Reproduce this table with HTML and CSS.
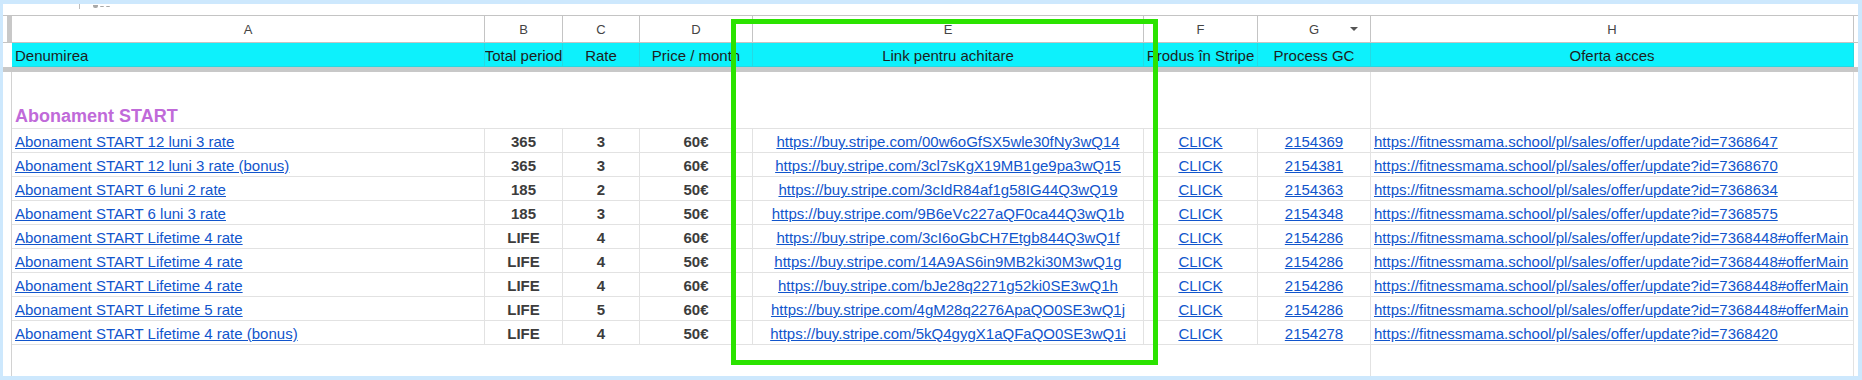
FILE: index.html
```html
<!DOCTYPE html>
<html lang="ro">
<head>
<meta charset="utf-8">
<title>Abonament START</title>
<link rel="stylesheet" href="styles.css">
</head>
<body>
<div class="frame">
  <div class="sheet">
    <div class="topstrip"><span class="tick"></span><span class="marks"><i class="mk mk1"></i><i class="mk mk2"></i><i class="mk mk3"></i></span></div>
    <div class="grid">
      <!-- column letters -->
      <div class="hd lead"><span class="frz"></span></div>
      <div class="hd">A</div>
      <div class="hd">B</div>
      <div class="hd">C</div>
      <div class="hd">D</div>
      <div class="hd">E</div>
      <div class="hd">F</div>
      <div class="hd drop">G<span class="tri"></span></div>
      <div class="hd">H</div>
      <div class="hd trail"></div>

      <!-- cyan header -->
      <div class="blank"></div>
      <div class="ch left">Denumirea</div>
      <div class="ch">Total period</div>
      <div class="ch">Rate</div>
      <div class="ch">Price / month</div>
      <div class="ch">Link pentru achitare</div>
      <div class="ch">Produs în Stripe</div>
      <div class="ch">Process GC</div>
      <div class="ch">Oferta acces</div>
      <div class="blank"></div>

      <div class="freeze"></div>

      <!-- section -->
      <div class="lead"></div>
      <div class="sec">Abonament START</div>
      <div class="c"></div>
      <div class="blank"></div>

      <!-- rows -->
      <div class="lead"></div>
      <div class="c l"><a class="lnk">Abonament START 12 luni 3 rate</a></div>
      <div class="c m b">365</div>
      <div class="c m b">3</div>
      <div class="c m b">60€</div>
      <div class="c m"><a class="lnk">https://buy.stripe.com/00w6oGfSX5wle30fNy3wQ14</a></div>
      <div class="c m"><a class="lnk">CLICK</a></div>
      <div class="c m"><a class="lnk">2154369</a></div>
      <div class="c l"><a class="lnk">https://fitnessmama.school/pl/sales/offer/update?id=7368647</a></div>
      <div class="blank"></div>

      <div class="lead"></div>
      <div class="c l"><a class="lnk">Abonament START 12 luni 3 rate (bonus)</a></div>
      <div class="c m b">365</div>
      <div class="c m b">3</div>
      <div class="c m b">60€</div>
      <div class="c m"><a class="lnk">https://buy.stripe.com/3cl7sKgX19MB1ge9pa3wQ15</a></div>
      <div class="c m"><a class="lnk">CLICK</a></div>
      <div class="c m"><a class="lnk">2154381</a></div>
      <div class="c l"><a class="lnk">https://fitnessmama.school/pl/sales/offer/update?id=7368670</a></div>
      <div class="blank"></div>

      <div class="lead"></div>
      <div class="c l"><a class="lnk">Abonament START 6 luni 2 rate</a></div>
      <div class="c m b">185</div>
      <div class="c m b">2</div>
      <div class="c m b">50€</div>
      <div class="c m"><a class="lnk">https://buy.stripe.com/3cIdR84af1g58IG44Q3wQ19</a></div>
      <div class="c m"><a class="lnk">CLICK</a></div>
      <div class="c m"><a class="lnk">2154363</a></div>
      <div class="c l"><a class="lnk">https://fitnessmama.school/pl/sales/offer/update?id=7368634</a></div>
      <div class="blank"></div>

      <div class="lead"></div>
      <div class="c l"><a class="lnk">Abonament START 6 luni 3 rate</a></div>
      <div class="c m b">185</div>
      <div class="c m b">3</div>
      <div class="c m b">50€</div>
      <div class="c m"><a class="lnk">https://buy.stripe.com/9B6eVc227aQF0ca44Q3wQ1b</a></div>
      <div class="c m"><a class="lnk">CLICK</a></div>
      <div class="c m"><a class="lnk">2154348</a></div>
      <div class="c l"><a class="lnk">https://fitnessmama.school/pl/sales/offer/update?id=7368575</a></div>
      <div class="blank"></div>

      <div class="lead"></div>
      <div class="c l"><a class="lnk">Abonament START Lifetime 4 rate</a></div>
      <div class="c m b">LIFE</div>
      <div class="c m b">4</div>
      <div class="c m b">60€</div>
      <div class="c m"><a class="lnk">https://buy.stripe.com/3cI6oGbCH7Etgb844Q3wQ1f</a></div>
      <div class="c m"><a class="lnk">CLICK</a></div>
      <div class="c m"><a class="lnk">2154286</a></div>
      <div class="c l"><a class="lnk">https://fitnessmama.school/pl/sales/offer/update?id=7368448#offerMain</a></div>
      <div class="blank"></div>

      <div class="lead"></div>
      <div class="c l"><a class="lnk">Abonament START Lifetime 4 rate</a></div>
      <div class="c m b">LIFE</div>
      <div class="c m b">4</div>
      <div class="c m b">50€</div>
      <div class="c m"><a class="lnk">https://buy.stripe.com/14A9AS6in9MB2ki30M3wQ1g</a></div>
      <div class="c m"><a class="lnk">CLICK</a></div>
      <div class="c m"><a class="lnk">2154286</a></div>
      <div class="c l"><a class="lnk">https://fitnessmama.school/pl/sales/offer/update?id=7368448#offerMain</a></div>
      <div class="blank"></div>

      <div class="lead"></div>
      <div class="c l"><a class="lnk">Abonament START Lifetime 4 rate</a></div>
      <div class="c m b">LIFE</div>
      <div class="c m b">4</div>
      <div class="c m b">60€</div>
      <div class="c m"><a class="lnk">https://buy.stripe.com/bJe28q2271g52ki0SE3wQ1h</a></div>
      <div class="c m"><a class="lnk">CLICK</a></div>
      <div class="c m"><a class="lnk">2154286</a></div>
      <div class="c l"><a class="lnk">https://fitnessmama.school/pl/sales/offer/update?id=7368448#offerMain</a></div>
      <div class="blank"></div>

      <div class="lead"></div>
      <div class="c l"><a class="lnk">Abonament START Lifetime 5 rate</a></div>
      <div class="c m b">LIFE</div>
      <div class="c m b">5</div>
      <div class="c m b">60€</div>
      <div class="c m"><a class="lnk">https://buy.stripe.com/4gM28q2276ApaQO0SE3wQ1j</a></div>
      <div class="c m"><a class="lnk">CLICK</a></div>
      <div class="c m"><a class="lnk">2154286</a></div>
      <div class="c l"><a class="lnk">https://fitnessmama.school/pl/sales/offer/update?id=7368448#offerMain</a></div>
      <div class="blank"></div>

      <div class="lead"></div>
      <div class="c l"><a class="lnk">Abonament START Lifetime 4 rate (bonus)</a></div>
      <div class="c m b">LIFE</div>
      <div class="c m b">4</div>
      <div class="c m b">50€</div>
      <div class="c m"><a class="lnk">https://buy.stripe.com/5kQ4gygX1aQFaQO0SE3wQ1i</a></div>
      <div class="c m"><a class="lnk">CLICK</a></div>
      <div class="c m"><a class="lnk">2154278</a></div>
      <div class="c l"><a class="lnk">https://fitnessmama.school/pl/sales/offer/update?id=7368420</a></div>
      <div class="blank"></div>

      <!-- empty tail -->
      <div class="lead"></div>
      <div class="fill"></div>
      <div class="fillh"></div>
      <div class="blank"></div>
    </div>
  </div>
  <div class="annot"></div>
</div>
</body>
</html>
```

FILE: styles.css
```css
* { box-sizing: border-box; }
html, body { margin: 0; padding: 0; }
body {
  background: #cde8fd;
  font-family: "Liberation Sans", Arial, sans-serif;
  width: 1862px;
  height: 380px;
  overflow: hidden;
}
.frame {
  position: relative;
  height: 380px;
  padding: 4px 4px 4px 3px;
}
.sheet {
  background: #fff;
  height: 372px;
  display: flex;
  flex-direction: column;
}
.topstrip {
  height: 11px;
  display: flex;
  align-items: flex-start;
  overflow: hidden;
  padding-left: 76px;
}
.tick {
  width: 1px;
  height: 5px;
  background: #bdbdbd;
}
.marks {
  display: flex;
  gap: 2px;
  margin-left: 13px;
  margin-top: 1px;
}
.mk {
  display: block;
  background: #a8a8a8;
  border-radius: 0 0 2px 2px;
}
.mk1 { width: 5px; height: 3px; }
.mk2 { width: 4px; height: 1px; margin-top: 1px; }
.mk3 { width: 4px; height: 1px; margin-top: 1px; }
.grid {
  display: grid;
  grid-template-columns: 9px 473px 78px 77px 113px 391px 114px 113px 483px 4px;
  grid-template-rows: 28px 24px 5px 57px repeat(9, 24px) 31px;
}
.hd {
  border-top: 1px solid #c4c4c4;
  border-bottom: 1px solid #c4c4c4;
  border-right: 1px solid #c4c4c4;
  display: flex;
  align-items: center;
  justify-content: center;
  font-size: 13px;
  color: #444;
}
.hd.lead {
  border-right: none;
  justify-content: flex-end;
  align-items: stretch;
}
.hd.trail { border-right: none; }
.frz {
  width: 5px;
  background: #c8c8c8;
}
.drop { position: relative; }
.tri {
  position: absolute;
  right: 12px;
  top: 11px;
  width: 0;
  height: 0;
  border-left: 4px solid transparent;
  border-right: 4px solid transparent;
  border-top: 4px solid #555;
}
.ch {
  background: #0df1fc;
  border-right: 1px solid #25d9e3;
  border-bottom: 1px solid #25d9e3;
  display: flex;
  align-items: flex-end;
  justify-content: center;
  padding-bottom: 2px;
  font-size: 15px;
  line-height: 17px;
  color: #1e1e1e;
  white-space: nowrap;
  overflow: hidden;
}
.ch.left {
  justify-content: flex-start;
  padding-left: 3px;
}
.freeze {
  grid-column: 1 / -1;
  background: #c8c8c8;
}
.lead { border-right: 1px solid #d2d2d2; }
.sec {
  grid-column: 2 / 9;
  border-right: 1px solid #e2e2e2;
  border-bottom: 1px solid #e2e2e2;
  display: flex;
  align-items: flex-end;
  padding: 0 0 2px 3px;
  font-size: 18px;
  line-height: 20px;
  font-weight: bold;
  color: #c06ad9;
}
.c {
  border-right: 1px solid #e2e2e2;
  border-bottom: 1px solid #e2e2e2;
  display: flex;
  align-items: flex-end;
  padding-bottom: 2px;
  font-size: 15px;
  line-height: 17px;
  white-space: nowrap;
  overflow: hidden;
}
.c.l { justify-content: flex-start; padding-left: 3px; }
.c.m { justify-content: center; }
.c.b { font-weight: bold; color: #3c3c3c; }
.lnk {
  color: #1155cc;
  text-decoration: underline;
}
.fill {
  grid-column: 2 / 9;
  border-right: 1px solid #e2e2e2;
}
.fillh { border-right: 1px solid #e2e2e2; }
.annot {
  position: absolute;
  left: 731px;
  top: 19px;
  width: 427px;
  height: 346px;
  border: 5px solid #2be300;
}
```
